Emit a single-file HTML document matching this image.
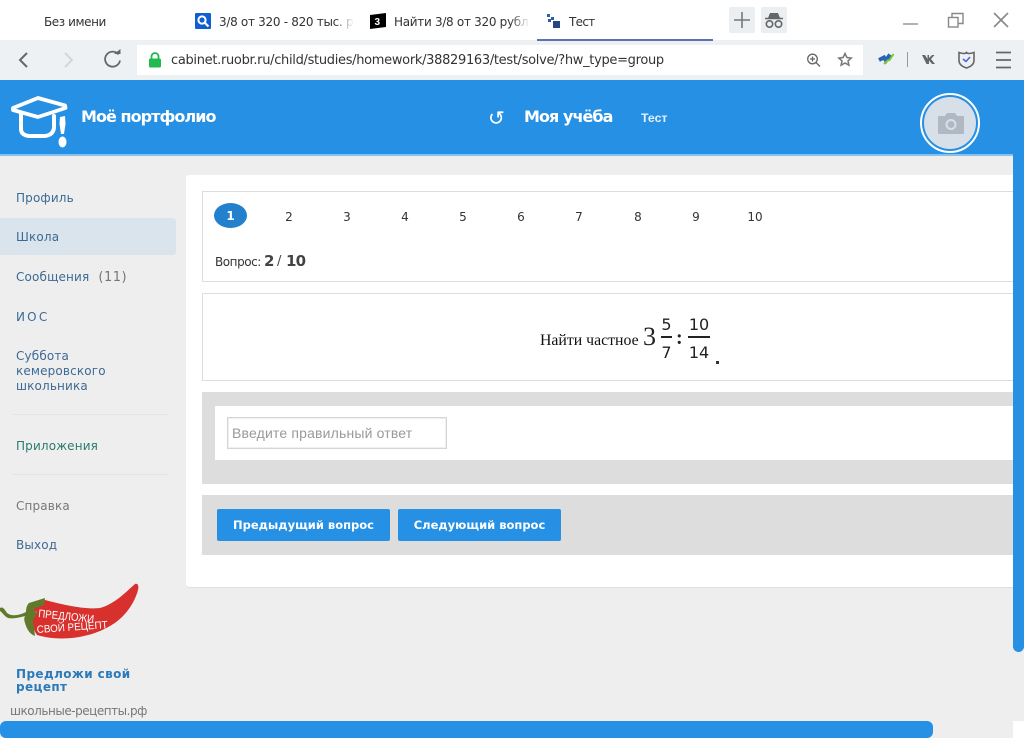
<!DOCTYPE html>
<html lang="ru"><head><meta charset="utf-8"><title>Тест</title>
<style>
html,body{margin:0;padding:0;width:1024px;height:738px;overflow:hidden;background:#eee;font-family:"Liberation Sans",sans-serif}
.a{position:absolute;white-space:nowrap}
.tab{font:12px "DejaVu Sans",sans-serif;color:#333;top:15px;line-height:14px;letter-spacing:-.42px}
.nav{font:12px/15px "DejaVu Sans",sans-serif;left:16px;color:#3d6a94;letter-spacing:.15px}
.pg{font:12px/14px "DejaVu Sans",sans-serif;color:#333;top:210px;width:20px;text-align:center}
.btn{background:#2690e4;border-radius:2px;color:#fff;font:bold 11.5px/32px "DejaVu Sans",sans-serif;text-align:center;height:32px;top:509px}
.fr{font:16px/19px "DejaVu Sans",sans-serif;color:#222;text-align:center}
</style></head><body>
<div class="a" style="left:0;top:0;width:1024px;height:40px;background:#fff"></div>
<div class="a tab" style="left:44px">Без имени</div>
<svg class="a" style="left:195px;top:13px" width="16" height="16"><rect width="16" height="16" rx="1" fill="#0f5fd0"/><circle cx="7" cy="7" r="3.6" fill="none" stroke="#fff" stroke-width="2"/><path d="M10 10l3.5 3.5" stroke="#fff" stroke-width="2.2"/></svg>
<div class="a tab" style="left:219px;width:135px;overflow:hidden;letter-spacing:-.3px">3/8 от 320 - 820 тыс. р</div>
<div class="a" style="left:334px;top:12px;width:20px;height:18px;background:linear-gradient(90deg,rgba(255,255,255,0),#fff)"></div>
<svg class="a" style="left:370px;top:13px" width="16" height="16"><path d="M0 2L16 0V14L0 16Z" fill="#000"/><text x="4.5" y="12" font-family="Liberation Sans" font-weight="700" font-size="10" fill="#fff">3</text></svg>
<div class="a tab" style="left:394px;width:135px;overflow:hidden;letter-spacing:-.3px">Найти 3/8 от 320 рубл</div>
<div class="a" style="left:510px;top:12px;width:20px;height:18px;background:linear-gradient(90deg,rgba(255,255,255,0),#fff)"></div>
<svg class="a" style="left:546px;top:13px" width="15" height="17"><g fill="#2a5db0"><rect x="1" y="1" width="3" height="3"/><rect x="5" y="4" width="3" height="3"/><rect x="2" y="6" width="3" height="3"/><rect x="7" y="8" width="7" height="7" fill="#24487f"/></g></svg>
<div class="a tab" style="left:569px;letter-spacing:-.7px">Тест</div>
<div class="a" style="left:729px;top:7px;width:26px;height:26px;background:#eceff2;border-radius:2px"></div>
<svg class="a" style="left:729px;top:7px" width="26" height="26"><path d="M13 5v16M5 13h16" stroke="#777" stroke-width="1.6"/></svg>
<div class="a" style="left:761px;top:7px;width:26px;height:26px;background:#eceff2;border-radius:2px"></div>
<svg class="a" style="left:761px;top:7px" width="26" height="26"><path d="M7 11l2-5h8l2 5z" fill="#666"/><path d="M4 11.5h18" stroke="#666" stroke-width="1.5"/><circle cx="8.5" cy="17" r="3.2" fill="none" stroke="#666" stroke-width="1.6"/><circle cx="17.5" cy="17" r="3.2" fill="none" stroke="#666" stroke-width="1.6"/></svg>
<svg class="a" style="left:900px;top:10px" width="112" height="22"><path d="M3 14h15" stroke="#999" stroke-width="1.5"/><path d="M52 7V3.500H63V13.500H58" fill="none" stroke="#888" stroke-width="1.4"/><rect x="48.500" y="7.500" width="9.500" height="9.500" fill="none" stroke="#888" stroke-width="1.4"/><path d="M94 3l14 14M108 3L94 17" stroke="#888" stroke-width="1.6"/></svg>

<div class="a" style="left:0;top:40px;width:1024px;height:40px;background:#eef1f4"></div>
<div class="a" style="left:537px;top:39px;width:176px;height:2px;background:#5d6fb5"></div>
<svg class="a" style="left:0;top:40px" width="130" height="40"><path d="M27 13l-7 7 7 7" fill="none" stroke="#666" stroke-width="2"/><path d="M65 13l7 7-7 7" fill="none" stroke="#d3d6d9" stroke-width="2"/><path d="M118.500 14.500a7.500 7.500 0 1 0 1.500 6" fill="none" stroke="#666" stroke-width="1.8"/><path d="M114 14h6.500v-5z" fill="#666"/></svg>
<div class="a" style="left:137px;top:45px;width:726px;height:30px;background:#fff"></div>
<svg class="a" style="left:148px;top:52px" width="14" height="16"><path d="M3.500 7V4.500a3.500 3.500 0 0 1 7 0V7" fill="none" stroke="#22b94f" stroke-width="1.8"/><rect x="1" y="6.500" width="12" height="9" rx="1.500" fill="#22b94f"/></svg>
<div class="a" style="left:171px;top:53px;font:13px/15px 'DejaVu Sans',sans-serif;color:#333;letter-spacing:-.31px">cabinet.ruobr.ru/child/studies/homework/38829163/test/solve/?hw_type=group</div>
<svg class="a" style="left:800px;top:44px" width="224" height="32"><circle cx="12.500" cy="15" r="4.800" fill="none" stroke="#666" stroke-width="1.3"/><path d="M16 18.500l4 4M10 15h5M12.500 12.500v5" stroke="#666" stroke-width="1.3"/><path d="M45 9.500l1.900 4 4.300.5-3.200 2.900.9 4.300-3.900-2.200-3.900 2.200.9-4.300-3.200-2.900 4.300-.5z" fill="none" stroke="#777" stroke-width="1.5"/><path d="M79 16l5-2.500 2 3 4-6" fill="none" stroke="#2a62b8" stroke-width="4"/><path d="M84 20l3.500-3.500 2-.5 4-6" fill="none" stroke="#78c832" stroke-width="2"/><path d="M107.500 8v15" stroke="#999"/><path d="M122 11h3l2.500 4v-4h1.500l0 3 3-3h2.500l-3.500 4 4 5h-3l-3-3.500v3.500h-2.500z" fill="#666"/><path d="M159 8.500q6 2 7.500 0 1.500 2 7.500 0v8q0 5-7.500 7.500-7.500-2.500-7.500-7.500z" fill="none" stroke="#666" stroke-width="1.6"/><path d="M163 15l3 2.500 4-4.500" fill="none" stroke="#4a5fe0" stroke-width="1.5"/><path d="M196 8.500h15M196 16h15M196 23.500h15" stroke="#666" stroke-width="1.7"/></svg>

<div class="a" style="left:0;top:80px;width:1024px;height:74px;background:#2690e4"></div>
<div class="a" style="left:0;top:154px;width:1024px;height:2px;background:#86c1f0"></div>
<svg class="a" style="left:10px;top:94px" width="60" height="56"><path d="M3 14L28 4 55 11.500 55.500 14 28 23 3 16Z" fill="none" stroke="#fff" stroke-width="3.8" stroke-linejoin="round"/><path d="M11 20v15q0 6 8 7h16q8-1 9-8V22" fill="none" stroke="#fff" stroke-width="4" stroke-linecap="round"/><path d="M50 23l5-1 .5 8-1.500 10h-3l-1.500-10z" fill="#fff"/><ellipse cx="52.500" cy="48" rx="4" ry="5.500" fill="#fff"/></svg>
<div class="a" style="left:81px;top:107px;font:bold 16px/20px 'DejaVu Sans',sans-serif;color:#fff;letter-spacing:-.95px">Моё портфолио</div>
<div class="a" style="left:488px;top:106px;font:20px/24px 'DejaVu Sans',sans-serif;color:#fff">↺</div>
<div class="a" style="left:524px;top:107px;font:bold 16px/20px 'DejaVu Sans',sans-serif;color:#fff;letter-spacing:-.95px">Моя учёба</div>
<div class="a" style="left:641px;top:111px;font:bold 12.3px/14px 'Liberation Sans',sans-serif;color:#e3f0fb">Тест</div>
<div class="a" style="left:920px;top:93px;width:56px;height:56px;border:2px solid #fff;border-radius:50%;background:#2690e4"></div>
<div class="a" style="left:924px;top:97px;width:52px;height:52px;border-radius:50%;background:#d7dfe8"></div>
<svg class="a" style="left:937px;top:112px" width="28" height="24"><path d="M2 4h6l2-3h8l2 3h6a1 1 0 0 1 1 1v16a1 1 0 0 1-1 1H2a1 1 0 0 1-1-1V5a1 1 0 0 1 1-1z" fill="#b0b8c4"/><circle cx="14" cy="12.500" r="4.500" fill="none" stroke="#d7dfe8" stroke-width="2"/></svg>

<div class="a" style="left:0;top:218px;width:176px;height:37px;background:#dae4ed;border-radius:0 3px 3px 0"></div>
<div class="a nav" style="top:191px">Профиль</div>
<div class="a nav" style="top:230px">Школа</div>
<div class="a nav" style="top:270px">Сообщения<span style="color:#777;margin-left:9px;font-size:13px;letter-spacing:.5px">(11)</span></div>
<div class="a nav" style="top:310px;letter-spacing:2.2px">ИОС</div>
<div class="a nav" style="top:349px">Суббота<br>кемеровского<br>школьника</div>
<div class="a" style="left:12px;top:414px;width:156px;height:1px;background:#e4e4e4"></div>
<div class="a nav" style="top:439px;color:#2d7a70">Приложения</div>
<div class="a" style="left:12px;top:474px;width:156px;height:1px;background:#e4e4e4"></div>
<div class="a nav" style="top:499px;color:#777">Справка</div>
<div class="a nav" style="top:538px">Выход</div>
<svg class="a" style="left:0;top:582px" width="140" height="60"><path d="M45 18C60 22 85 28 100 26C115 22 128 8 135 2C138 1 139 4 138 8C135 20 125 36 110 44C90 56 60 60 37 53C32 46 30 36 37 30L32 28Z" fill="#d8302c"/><path d="M0 26C3 24 5 28 7 31C12 35 20 33 26 30C26 26 27 23 29 21L45 16L44 23L33 27L37 31L33 38L35 54C30 52 27 48 25 41C24 38 24 36 25 34C18 36 12 37 8 36C4 34 2 30 0 29Z" fill="#5f7a2a"/><text x="38" y="35" font-family="Liberation Sans" font-size="11" fill="#fff" textLength="56" lengthAdjust="spacingAndGlyphs" transform="rotate(6 38 35)">ПРЕДЛОЖИ</text><text x="37" y="51" font-family="Liberation Sans" font-size="10.500" fill="#fff" textLength="71" lengthAdjust="spacingAndGlyphs" transform="rotate(-4 37 51)">СВОЙ РЕЦЕПТ</text></svg>
<div class="a" style="left:16px;top:668px;font:bold 12px/13px 'DejaVu Sans',sans-serif;color:#2c7ab8;letter-spacing:.4px">Предложи свой<br>рецепт</div>
<div class="a" style="left:10px;top:704px;font:12px/14px 'DejaVu Sans',sans-serif;color:#777;letter-spacing:-.47px">школьные-рецепты.рф</div>

<div class="a" style="left:186px;top:175px;width:827px;height:412px;background:#fff;border-radius:3px 0 0 3px;box-shadow:0 1px 1px #ddd"></div>
<div class="a" style="left:202px;top:191px;width:811px;height:89px;border:1px solid #ddd;border-right:0;background:#fff"></div>
<div class="a" style="left:214px;top:203px;width:33px;height:25px;border-radius:50%;background:#2280cc;color:#fff;font:bold 12px/27px 'DejaVu Sans',sans-serif;text-align:center">1</div>
<div class="a pg" style="left:279px">2</div><div class="a pg" style="left:337px">3</div><div class="a pg" style="left:395px">4</div><div class="a pg" style="left:453px">5</div><div class="a pg" style="left:511px">6</div><div class="a pg" style="left:569px">7</div><div class="a pg" style="left:628px">8</div><div class="a pg" style="left:686px">9</div><div class="a pg" style="left:745px">10</div>
<div class="a" style="left:215px;top:251px;font:12px/22px 'DejaVu Sans',sans-serif;color:#333;letter-spacing:-.45px">Вопрос:</div>
<div class="a" style="left:264px;top:250px;font:bold 15px/22px 'DejaVu Sans',sans-serif;color:#444">2</div>
<div class="a" style="left:277px;top:251px;font:13px/22px 'DejaVu Sans',sans-serif;color:#444">/</div>
<div class="a" style="left:286px;top:250px;font:bold 15px/22px 'DejaVu Sans',sans-serif;color:#444;letter-spacing:-.8px">10</div>

<div class="a" style="left:202px;top:293px;width:811px;height:86px;border:1px solid #ddd;border-right:0;background:#fff"></div>
<div class="a" style="left:540px;top:332px;font:15.8px/18px 'Liberation Serif',serif;color:#111">Найти частное</div>
<div class="a" style="left:643px;top:321px;font:26px/32px 'Liberation Serif',serif;color:#222">3</div>
<div class="a fr" style="left:660px;top:315px;width:13px">5</div>
<div class="a" style="left:661px;top:336px;width:11px;height:2px;background:#222"></div>
<div class="a fr" style="left:660px;top:343px;width:13px">7</div>
<div class="a" style="left:676px;top:328px;font:bold 20px/20px 'Liberation Serif',serif;color:#222">:</div>
<div class="a fr" style="left:687px;top:315px;width:24px">10</div>
<div class="a" style="left:688px;top:336px;width:22px;height:2px;background:#222"></div>
<div class="a fr" style="left:687px;top:343px;width:24px">14</div>
<div class="a" style="left:716px;top:361px;width:3px;height:3px;background:#333"></div>

<div class="a" style="left:202px;top:392px;width:811px;height:92px;background:#ddd"></div>
<div class="a" style="left:215px;top:406px;width:798px;height:54px;background:#fff"></div>
<div class="a" style="left:227px;top:417px;width:218px;height:30px;border:1px solid #d5d5d5;box-shadow:inset 0 0 0 1px #f0f0f0;background:#fff;font:14px/31px 'Liberation Sans',sans-serif;color:#999;text-indent:4px;letter-spacing:.17px">Введите правильный ответ</div>

<div class="a" style="left:202px;top:495px;width:811px;height:60px;background:#ddd"></div>
<div class="a btn" style="left:217px;width:173px">Предыдущий вопрос</div>
<div class="a btn" style="left:398px;width:163px">Следующий вопрос</div>

<div class="a" style="left:1013px;top:80px;width:11px;height:572px;background:#2690e4;border-radius:6px"></div>
<div class="a" style="left:0;top:721px;width:933px;height:17px;background:#2690e4;border-radius:6px"></div>
<div class="a" style="left:1013px;top:721px;width:11px;height:17px;background:#fff"></div>
</body></html>
